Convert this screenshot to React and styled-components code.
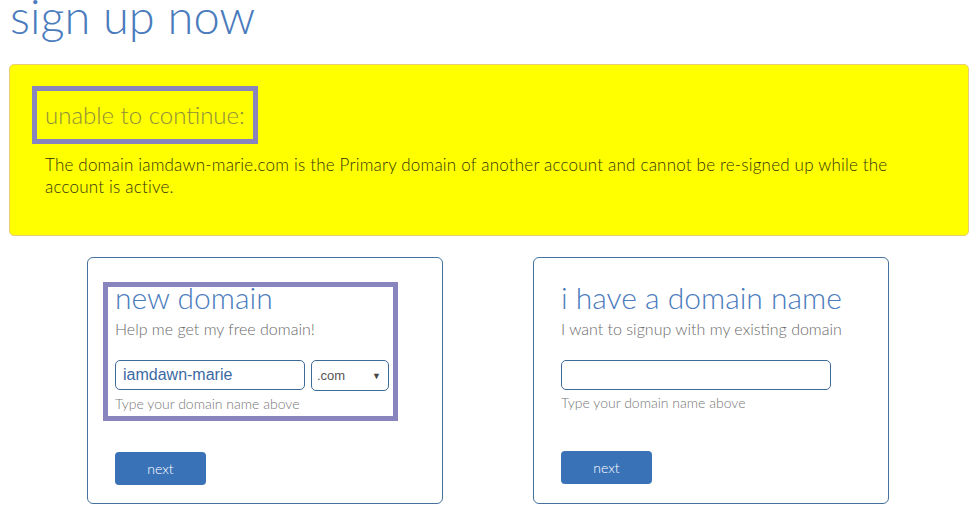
import React from "react";
import styled, { createGlobalStyle } from "styled-components";

const GlobalStyle = createGlobalStyle`
    body {
        margin: 0;
        background: #ffffff;
        font-family: "Lato", "Open Sans", sans-serif;
        overflow: hidden;
    }
`;

function DomainCard({ title, subtitle, highlight, children }) {
    return (
        <Card>
            <Field $highlight={highlight}>
                <CardTitle>{title}</CardTitle>
                <Subtitle>{subtitle}</Subtitle>
                <InputRow>{children}</InputRow>
                <Helper>Type your domain name above</Helper>
            </Field>
            <NextButton type="button">next</NextButton>
        </Card>
    );
}

function App() {
    return (
        <Page>
            <GlobalStyle />
            <Heading>sign up now</Heading>
            <Alert>
                <AlertTitle>unable to continue:</AlertTitle>
                <AlertText>
                    The domain iamdawn-marie.com is the Primary domain of another account and
                    cannot be re-signed up while the account is active.
                </AlertText>
            </Alert>
            <Cards>
                <DomainCard title="new domain" subtitle="Help me get my free domain!" highlight>
                    <TextInput $width={190} defaultValue="iamdawn-marie" />
                    <Select>
                        <span>.com</span>
                        <Arrow>▼</Arrow>
                    </Select>
                </DomainCard>
                <DomainCard
                    title="i have a domain name"
                    subtitle="I want to signup with my existing domain"
                >
                    <TextInput $width={270} />
                </DomainCard>
            </Cards>
        </Page>
    );
}

const Page = styled.div`
    padding: 1px 9px 0 9px;
    width: 978px;
    box-sizing: border-box;
`;

const Heading = styled.h1`
    margin: -7px 0 26px 1px;
    font-size: 47px;
    line-height: 44px;
    font-weight: 300;
    color: #4a7bbd;
`;

const Alert = styled.div`
    background: #ffff00;
    border: 1px solid #e9cc74;
    border-radius: 5px;
    padding: 21px 22px 37px;
`;

const AlertTitle = styled.div`
    display: inline-block;
    border: 5px solid #8884bd;
    padding: 0 8px;
    font-size: 24px;
    line-height: 48px;
    font-weight: 300;
    color: #8e8e3c;
`;

const AlertText = styled.p`
    margin: 10px 0 0 13px;
    max-width: 870px;
    font-size: 17px;
    line-height: 22px;
    letter-spacing: 0.2px;
    font-weight: 300;
    color: #33330f;
`;

const Cards = styled.div`
    display: flex;
    justify-content: center;
    align-items: flex-start;
    gap: 90px;
    margin-top: 21px;
    padding-right: 2px;
`;

const Card = styled.div`
    width: 356px;
    height: 247px;
    box-sizing: border-box;
    border: 1px solid #46719c;
    border-radius: 6px;
    padding: 24px 27px;
`;

const Field = styled.div`
    width: 295px;
    box-sizing: border-box;
    margin-left: -12px;
    border: 5px solid ${(props) => (props.$highlight ? "#8884bd" : "transparent")};
    border-top-width: 0;
    padding: 0 4px 3px 7px;
    position: relative;

    &::before {
        content: "";
        display: ${(props) => (props.$highlight ? "block" : "none")};
        position: absolute;
        left: -5px;
        right: -5px;
        top: 0;
        height: 5px;
        background: #8884bd;
    }
`;

const CardTitle = styled.h2`
    margin: 0;
    font-size: 30px;
    line-height: 30px;
    font-weight: 300;
    color: #4a7bbd;
    white-space: nowrap;
`;

const Subtitle = styled.div`
    margin-top: 7px;
    font-size: 16px;
    line-height: 20px;
    font-weight: 300;
    color: #6a6a6a;
    white-space: nowrap;
`;

const InputRow = styled.div`
    display: flex;
    gap: 6px;
    margin-top: 21px;
`;

const TextInput = styled.input`
    width: ${(props) => props.$width}px;
    height: 30px;
    box-sizing: border-box;
    border: 1px solid #3d6b98;
    border-radius: 5px;
    padding: 0 7px;
    font-family: "Liberation Sans", Arial, sans-serif;
    font-size: 16px;
    color: #3b6aa3;
    outline: none;
`;

const Select = styled.div`
    width: 78px;
    height: 31px;
    box-sizing: border-box;
    border: 1px solid #3d6b98;
    border-radius: 5px;
    padding: 0 7px 0 5px;
    display: flex;
    align-items: center;
    justify-content: space-between;
    font-family: "Liberation Sans", Arial, sans-serif;
    font-size: 13px;
    color: #555;
`;

const Arrow = styled.span`
    font-size: 9px;
    color: #444;
`;

const Helper = styled.div`
    margin-top: 4px;
    font-size: 14px;
    line-height: 18px;
    font-weight: 300;
    color: #777;
    white-space: nowrap;
`;

const NextButton = styled.button`
    display: block;
    margin-top: 31px;
    width: 91px;
    height: 33px;
    border: none;
    border-radius: 4px;
    background: #3a72b8;
    color: #ffffff;
    font-family: "Lato", sans-serif;
    font-size: 14px;
    font-weight: 300;
`;

export default App;
